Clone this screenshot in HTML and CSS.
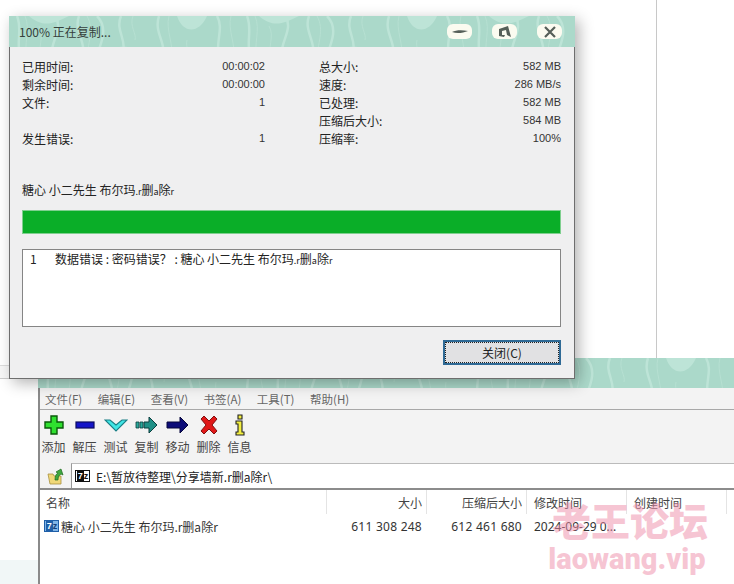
FILE: index.html
```html
<!DOCTYPE html>
<html lang="zh-CN">
<head>
    <meta charset="UTF-8">
    <title>100% 正在复制...</title>
    <link rel="stylesheet" href="styles.css">
</head>
<body>
<svg class="defs" width="0" height="0">
    <defs>
        <pattern id="wood" width="230" height="44" patternUnits="userSpaceOnUse">
            <rect width="230" height="44" fill="#abd9ca"/>
            <path d="M20 0C34 12 44 8 60 0zM96 44C104 26 124 26 134 44zM168 0C174 18 190 18 198 0z" fill="#bde4d7"/>
            <path d="M8 0C14 14 6 28 12 44M46 0C56 14 38 28 44 44M70 0C64 16 80 28 72 44M88 0C100 12 92 28 86 44M112 0C106 14 118 24 114 36M150 0C144 18 160 28 152 44M208 0C216 14 204 28 212 44" fill="none" stroke="#bde4d7" stroke-width="2.5"/>
            <path d="M16 0C22 14 14 28 18 44M30 10C36 20 28 32 32 44M78 0C86 14 78 28 78 44M124 0C120 10 128 18 126 24M160 0C156 14 166 30 162 44M178 24C176 32 182 38 180 44M222 0C218 14 228 30 224 44" fill="none" stroke="#b6e0d2" stroke-width="1"/>
        </pattern>
    </defs>
</svg>

<div class="desktop">
    <div class="back-line"></div>
    <div class="back-strip"></div>
    <div class="back-foot"></div>

    <!-- main window -->
    <div class="window main-window">
        <div class="wood-bar main-title">
            <svg width="100%" height="100%"><rect width="100%" height="100%" fill="url(#wood)"/></svg>
        </div>
        <div class="menu-bar">
            <span>文件(F)</span>
            <span>编辑(E)</span>
            <span>查看(V)</span>
            <span>书签(A)</span>
            <span>工具(T)</span>
            <span>帮助(H)</span>
        </div>
        <div class="tool-bar">
            <div class="tool">
                <svg width="22" height="22" viewBox="0 0 22 22"><path d="M8 2h6v6h6v6h-6v6H8v-6H2V8h6z" fill="#2fe02f" stroke="#0a5a0a" stroke-width="1.4"/></svg>
                <span>添加</span>
            </div>
            <div class="tool">
                <svg width="22" height="22" viewBox="0 0 22 22"><rect x="2" y="8" width="18" height="6" fill="#1414c8" stroke="#0a0a60" stroke-width="1.2"/></svg>
                <span>解压</span>
            </div>
            <div class="tool">
                <svg width="24" height="22" viewBox="0 0 24 22"><path d="M1 6l5 0 6 5 6-5 5 0-11 11z" fill="#3fe6e6" stroke="#1a7f86" stroke-width="1.2"/></svg>
                <span>测试</span>
            </div>
            <div class="tool">
                <svg width="24" height="22" viewBox="0 0 24 22"><path d="M1 8h3v6H1zM5 8h3v6H5z" fill="#2aa89a" stroke="#0b3d3d" stroke-width=".8"/><path d="M9 8h5V3l8 8-8 8v-5H9z" fill="#1f8f86" stroke="#0b3d3d"/></svg>
                <span>复制</span>
            </div>
            <div class="tool">
                <svg width="24" height="22" viewBox="0 0 24 22"><path d="M1 8h13V3l8 8-8 8v-5H1z" fill="#0c0c78" stroke="#05053a"/></svg>
                <span>移动</span>
            </div>
            <div class="tool">
                <svg width="22" height="22" viewBox="0 0 22 22"><path d="M3 5l3-3 5 5 5-5 3 3-5 6 5 6-3 3-5-5-5 5-3-3 5-6z" fill="#e01818" stroke="#801010"/></svg>
                <span>删除</span>
            </div>
            <div class="tool">
                <svg width="22" height="22" viewBox="0 0 22 22"><path d="M9 1h4v4H9zM7 7h6v11h2v3H7v-3h2v-8H7z" fill="#f2ee40" stroke="#222" stroke-width="1.1"/></svg>
                <span>信息</span>
            </div>
        </div>
        <div class="address-bar">
            <div class="up-btn">
                <svg width="18" height="20" viewBox="0 0 18 20"><path d="M1 8h5l1 2h7v8H3z" fill="#f0d878" stroke="#a89040" stroke-width=".8"/><path d="M8 14c0-4 1-6 3-7L9 6l5-3 2 6-2-1c-2 1-3 3-3 6z" fill="#3fa83f" stroke="#1c6a1c" stroke-width=".7"/></svg>
            </div>
            <div class="path-box">
                <span class="sz-icon"><b>7</b>z</span>
                <span>E:\暂放待整理\分享墙新.r删a除r\</span>
            </div>
        </div>
        <div class="list-head">
            <div class="col col-name">名称</div>
            <div class="col col-size">大小</div>
            <div class="col col-packed">压缩后大小</div>
            <div class="col col-date">修改时间</div>
            <div class="col col-created">创建时间</div>
        </div>
        <div class="list-row">
            <div class="cell-name"><span class="sz-icon sz-blue"><b>7</b>z</span>糖心 小二先生 布尔玛.r删a除r</div>
            <div class="cell-size">611 308 248</div>
            <div class="cell-packed">612 461 680</div>
            <div class="cell-date">2024-09-29 0...</div>
        </div>
    </div>

    <!-- progress dialog -->
    <div class="window dialog">
        <div class="wood-bar dialog-title">
            <svg class="wood-fill" width="100%" height="100%"><rect width="100%" height="100%" fill="url(#wood)"/></svg>
            <span class="title-text">100% 正在复制...</span>
            <div class="title-btns">
                <div class="title-btn">
                    <svg width="16" height="8" viewBox="0 0 16 8"><path d="M0 4C4 2 10 2 16 3C11 5 5 6 0 4z" fill="#555f58"/></svg>
                </div>
                <div class="title-btn">
                    <svg width="16" height="12" viewBox="0 0 16 12"><path d="M2 3l9-3 3 11-4-2-1-5-4 1 0 4 3 0-1 2-5-1z" fill="#555f58"/></svg>
                </div>
                <div class="title-btn">
                    <svg width="12" height="12" viewBox="0 0 12 12"><path d="M1 1l10 10M11 1L1 11" stroke="#555f58" stroke-width="2.2"/></svg>
                </div>
            </div>
        </div>
        <div class="dialog-body">
            <div class="stats">
                <div class="stat-col">
                    <div class="stat"><span>已用时间:</span><span class="num">00:00:02</span></div>
                    <div class="stat"><span>剩余时间:</span><span class="num">00:00:00</span></div>
                    <div class="stat"><span>文件:</span><span class="num">1</span></div>
                    <div class="stat"></div>
                    <div class="stat"><span>发生错误:</span><span class="num">1</span></div>
                </div>
                <div class="stat-col">
                    <div class="stat"><span>总大小:</span><span class="num">582 MB</span></div>
                    <div class="stat"><span>速度:</span><span class="num">286 MB/s</span></div>
                    <div class="stat"><span>已处理:</span><span class="num">582 MB</span></div>
                    <div class="stat"><span>压缩后大小:</span><span class="num">584 MB</span></div>
                    <div class="stat"><span>压缩率:</span><span class="num">100%</span></div>
                </div>
            </div>
            <div class="file-name">糖心 小二先生 布尔玛<small>.r</small>删<small>a</small>除<small>r</small></div>
            <div class="progress"></div>
            <div class="error-list">
                <span class="err-no">1</span>
                <span>数据错误 : 密码错误？ : 糖心 小二先生 布尔玛<small>.r</small>删<small>a</small>除<small>r</small></span>
            </div>
            <div class="dialog-foot">
                <button type="button" class="close-btn">关闭(C)</button>
            </div>
        </div>
    </div>

    <div class="watermark">
        <div class="wm-cn">老王论坛</div>
        <div class="wm-en">laowang.vip</div>
    </div>
</div>
</body>
</html>
```

FILE: styles.css
```css
* {
    box-sizing: border-box;
}

html, body {
    margin: 0;
    padding: 0;
}

body {
    width: 734px;
    height: 584px;
    overflow: hidden;
    background-color: #fff;
    font-family: "Noto Sans CJK SC", "Liberation Sans", sans-serif;
    font-size: 12px;
    color: #222;
}

small {
    font-size: 9px;
    line-height: 1;
}

.defs {
    position: absolute;
}

.desktop {
    position: relative;
    width: 734px;
    height: 584px;
    overflow: hidden;
}

.back-line {
    position: absolute;
    left: 656px;
    top: 0;
    width: 1px;
    height: 358px;
    background-color: #c8c8c8;
}

.back-strip {
    position: absolute;
    left: 0;
    top: 365px;
    width: 38px;
    height: 14px;
    border-top: 1px solid #ddd;
    border-bottom: 1px solid #ccc;
    background-color: #f7f7f7;
}

.back-foot {
    position: absolute;
    left: 0;
    top: 560px;
    width: 38px;
    height: 24px;
    background-color: #f1f7f7;
}

.window {
    position: absolute;
}

.wood-bar svg {
    display: block;
}

/* main window */
.main-window {
    left: 38px;
    top: 358px;
    width: 696px;
    height: 226px;
    border-left: 2px solid #8a8a8a;
    background-color: #fff;
    display: flex;
    flex-direction: column;
}

.main-title {
    height: 30px;
    margin-left: -2px;
}

.menu-bar {
    height: 22px;
    display: flex;
    align-items: center;
    padding-left: 5px;
    gap: 15.5px;
    background-color: #f3f3f3;
    border-bottom: 1px solid #a8a8a8;
    color: #666;
    font-size: 11.5px;
}

.tool-bar {
    height: 53px;
    display: flex;
    background-color: #f3f3f3;
}

.tool {
    width: 31px;
    display: flex;
    flex-direction: column;
    align-items: center;
    padding-top: 4px;
    gap: 2px;
    color: #444;
}

.tool:first-child {
    margin-left: -2px;
}

.tool svg {
    display: block;
}

.tool span {
    line-height: 18px;
}

.address-bar {
    height: 27px;
    display: flex;
    background-color: #f3f3f3;
    border-bottom: 2px solid #8c8c8c;
}

.up-btn {
    width: 31px;
    display: flex;
    align-items: center;
    justify-content: center;
}

.path-box {
    flex: 1;
    display: flex;
    align-items: center;
    gap: 6px;
    padding-left: 3px;
    background-color: #fff;
    border-left: 1px solid #999;
    border-top: 1px solid #bbb;
}

.sz-icon {
    width: 15px;
    height: 12px;
    display: flex;
    justify-content: center;
    border: 1px solid #111;
    background-color: #fff;
    color: #111;
    font-family: "Liberation Sans", sans-serif;
    font-size: 9px;
    font-weight: bold;
    line-height: 10px;
}

.sz-icon b {
    width: 7px;
    background-color: #111;
    color: #fff;
    text-align: center;
}

.sz-blue {
    border-color: #1f5fa8;
    background-color: #7fb4e6;
    color: #123f78;
    margin-right: 2px;
}

.sz-blue b {
    background-color: #1f5fa8;
}

.list-head {
    height: 24px;
    display: flex;
    align-items: center;
    color: #444;
}

.col {
    height: 100%;
    display: flex;
    align-items: center;
    border-right: 1px solid #e4e4e4;
}

.col-name {
    width: 287px;
    padding-left: 6px;
}

.col-size,
.col-packed {
    width: 100px;
    justify-content: flex-end;
    padding-right: 4px;
}

.col-date,
.col-created {
    width: 100px;
    padding-left: 7px;
}

.list-row {
    height: 22px;
    margin-top: 1px;
    display: flex;
    align-items: center;
    color: #333;
}

.cell-name {
    width: 287px;
    display: flex;
    align-items: center;
    padding-left: 4px;
    white-space: nowrap;
}

.cell-size,
.cell-packed {
    width: 100px;
    padding-right: 5px;
    text-align: right;
    font-family: "Noto Sans", sans-serif;
    letter-spacing: 0.25px;
}

.cell-date {
    padding-left: 7px;
    font-family: "Noto Sans", sans-serif;
}

/* progress dialog */
.dialog {
    left: 9px;
    top: 16px;
    width: 566px;
    height: 363px;
    background-color: #efeff0;
    box-shadow: 4px 4px 14px rgba(0, 0, 0, 0.3);
    display: flex;
    flex-direction: column;
}

.dialog-title {
    position: relative;
    height: 31px;
    flex-shrink: 0;
    display: flex;
    align-items: center;
    justify-content: space-between;
    padding: 0 13px 0 10px;
}

.wood-fill {
    position: absolute;
    left: 0;
    top: 0;
}

.title-text {
    position: relative;
    color: #35403b;
}

.title-btns {
    position: relative;
    display: flex;
    gap: 20px;
}

.title-btn {
    width: 25px;
    height: 15px;
    display: flex;
    align-items: center;
    justify-content: center;
    background-color: #fbfbf0;
    border-radius: 6px;
}

.dialog-body {
    flex: 1;
    display: flex;
    flex-direction: column;
    padding: 10px 13px 0 12px;
    border-left: 1px solid #6e6e6e;
    border-right: 1px solid #6e6e6e;
    border-bottom: 1px solid #6e6e6e;
}

.stats {
    display: flex;
    gap: 54px;
}

.stat-col {
    width: 243px;
}

.stat-col + .stat-col {
    flex: 1;
}

.stat {
    height: 18px;
    display: flex;
    align-items: center;
    justify-content: space-between;
    white-space: nowrap;
}

.num {
    color: #333;
    font-family: "Liberation Sans", sans-serif;
    font-size: 11px;
}

.file-name {
    height: 18px;
    margin-top: 34px;
    line-height: 18px;
}

.progress {
    height: 24px;
    margin-top: 11px;
    background-color: #0aae28;
    border: 1px solid #7fcf8f;
}

.error-list {
    height: 78px;
    margin-top: 15px;
    padding: 0 0 0 7px;
    display: flex;
    background-color: #fff;
    border: 1px solid #858585;
    line-height: 18px;
}

.err-no {
    width: 25px;
}

.dialog-foot {
    display: flex;
    justify-content: flex-end;
    margin-top: 13px;
}

.close-btn {
    width: 118px;
    height: 25px;
    padding: 0;
    background-color: #e1e1e3;
    border: 2px solid #2f6a96;
    outline: 1px dotted #222;
    outline-offset: -3px;
    color: #222;
    font-family: inherit;
    font-size: 12px;
}

.watermark {
    position: absolute;
    left: 540px;
    top: 494px;
    width: 180px;
    text-align: center;
    color: rgba(238, 140, 168, 0.5);
    font-weight: 900;
}

.wm-cn {
    font-size: 39px;
    line-height: 50px;
}

.wm-en {
    margin: -2px 0 0 -6px;
    font-family: "Roboto", sans-serif;
    font-size: 29px;
    line-height: 34px;
}
```
